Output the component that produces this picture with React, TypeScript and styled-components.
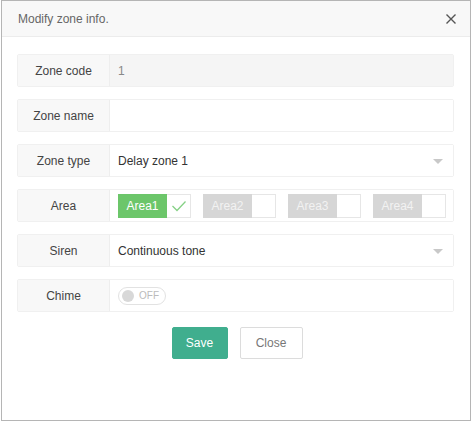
import styled, { createGlobalStyle } from 'styled-components'

const GlobalStyle = createGlobalStyle`
	html, body {
		margin: 0;
		padding: 0;
		background: #ffffff;
	}
	body {
		font-family: 'Liberation Sans', Arial, sans-serif;
		font-size: 12px;
		color: #333;
	}
`

const areas = [
	{ name: 'Area1', checked: true },
	{ name: 'Area2', checked: false },
	{ name: 'Area3', checked: false },
	{ name: 'Area4', checked: false },
]

function App() {
	return (
		<>
			<GlobalStyle />
			<Dialog>
				<Header>
					<Title>Modify zone info.</Title>
					<CloseIcon viewBox='0 0 12 12' aria-label='close'>
						<path d='M1.5 1.5 L10.5 10.5 M10.5 1.5 L1.5 10.5' />
					</CloseIcon>
				</Header>
				<Body>
					<Row>
						<Label>Zone code</Label>
						<Value $disabled>1</Value>
					</Row>
					<Row>
						<Label>Zone name</Label>
						<Value />
					</Row>
					<Row>
						<Label>Zone type</Label>
						<Value>
							Delay zone 1
							<Caret />
						</Value>
					</Row>
					<Row>
						<Label>Area</Label>
						<Value>
							<AreaList>
								{areas.map((a) => (
									<AreaItem key={a.name}>
										<AreaName $checked={a.checked}>{a.name}</AreaName>
										<AreaTick>
											{a.checked && (
												<svg width='16' height='12' viewBox='0 0 16 12'>
													<path d='M1.5 6 L6 10.5 L14.5 1.5' fill='none' stroke='#86d186' strokeWidth='1.3' />
												</svg>
											)}
										</AreaTick>
									</AreaItem>
								))}
							</AreaList>
						</Value>
					</Row>
					<Row>
						<Label>Siren</Label>
						<Value>
							Continuous tone
							<Caret />
						</Value>
					</Row>
					<Row>
						<Label>Chime</Label>
						<Value>
							<Switch>
								<Knob />
								OFF
							</Switch>
						</Value>
					</Row>
					<Actions>
						<Button $primary>Save</Button>
						<Button>Close</Button>
					</Actions>
				</Body>
			</Dialog>
		</>
	)
}

const Dialog = styled.div`
	box-sizing: border-box;
	margin: 0 1px;
	width: 470px;
	height: 421px;
	border: 1px solid #b5b5b5;
	background: #fff;
	display: flex;
	flex-direction: column;
`

const Header = styled.div`
	height: 35px;
	background: #f8f8f8;
	border-bottom: 1px solid #ececec;
	display: flex;
	align-items: center;
	justify-content: space-between;
	padding: 0 13px 0 16px;
`

const Title = styled.span`
	font-size: 12px;
	color: #666;
`

const CloseIcon = styled.svg`
	width: 12px;
	height: 12px;
	stroke: #555;
	stroke-width: 1.4;
	fill: none;
`

const Body = styled.div`
	padding: 17px 16px 0 15px;
	display: flex;
	flex-direction: column;
	gap: 12px;
`

const Row = styled.div`
	display: flex;
	height: 33px;
	box-sizing: border-box;
	border: 1px solid #f0f0f0;
	border-radius: 2px;
`

const Label = styled.div`
	width: 91px;
	flex-shrink: 0;
	background: #f8f8f8;
	border-right: 1px solid #eeeeee;
	display: flex;
	align-items: center;
	justify-content: center;
	color: #444;
`

const Value = styled.div<{ $disabled?: boolean }>`
	position: relative;
	flex: 1;
	display: flex;
	align-items: center;
	padding-left: 8px;
	background: ${(p) => (p.$disabled ? '#f5f5f5' : '#fff')};
	color: ${(p) => (p.$disabled ? '#888' : '#333')};
`

const Caret = styled.span`
	position: absolute;
	right: 10px;
	top: 14px;
	width: 0;
	height: 0;
	border-left: 5px solid transparent;
	border-right: 5px solid transparent;
	border-top: 5px solid #c8c8c8;
`

const AreaList = styled.div`
	display: flex;
	gap: 12px;
`

const AreaItem = styled.div`
	display: flex;
	height: 24px;
	width: 73px;
	box-sizing: border-box;
	border: 1px solid #e6e6e6;
`

const AreaName = styled.span<{ $checked: boolean }>`
	width: 49px;
	display: flex;
	align-items: center;
	justify-content: center;
	margin: -1px 0 -1px -1px;
	background: ${(p) => (p.$checked ? '#6cc66a' : '#d6d6d6')};
	color: ${(p) => (p.$checked ? '#fff' : '#f2f2f2')};
	font-size: 12px;
`

const AreaTick = styled.span`
	flex: 1;
	display: flex;
	align-items: center;
	justify-content: center;
	background: #fff;
`

const Switch = styled.div`
	box-sizing: border-box;
	width: 48px;
	height: 18px;
	border: 1px solid #e2e2e2;
	border-radius: 9px;
	display: flex;
	align-items: center;
	gap: 5px;
	padding-left: 3px;
	font-size: 10px;
	color: #bbb;
`

const Knob = styled.span`
	width: 12px;
	height: 12px;
	border-radius: 50%;
	background: #d8d8d8;
`

const Actions = styled.div`
	display: flex;
	justify-content: center;
	gap: 12px;
	margin-top: 3px;
	padding-left: 3px;
`

const Button = styled.button<{ $primary?: boolean }>`
	height: 32px;
	width: ${(p) => (p.$primary ? '56px' : '63px')};
	padding: 0;
	font-family: 'Liberation Sans', Arial, sans-serif;
	font-size: 12px;
	border-radius: 2px;
	cursor: pointer;
	border: 1px solid ${(p) => (p.$primary ? '#40ae8e' : '#dcdcdc')};
	background: ${(p) => (p.$primary ? '#40ae8e' : '#fff')};
	color: ${(p) => (p.$primary ? '#fff' : '#777')};
`

export default App
